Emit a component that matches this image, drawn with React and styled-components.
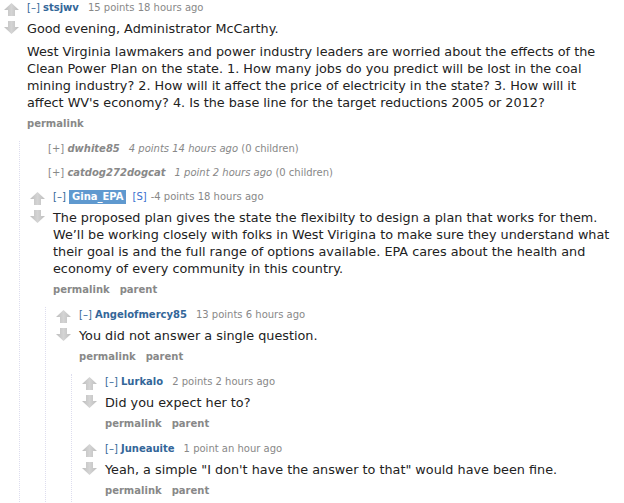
import React from 'react';
import styled, { createGlobalStyle } from 'styled-components';

const GlobalStyle = createGlobalStyle`
  body {
    margin: 0;
    background: #fff;
    font-family: "DejaVu Sans", Verdana, sans-serif;
    color: #222;
  }
`;

const comments = [
  {
    author: 'stsjwv',
    score: '15 points',
    time: '18 hours ago',
    body: [
      'Good evening, Administrator McCarthy.',
      "West Virginia lawmakers and power industry leaders are worried about the effects of the Clean Power Plan on the state. 1. How many jobs do you predict will be lost in the coal mining industry? 2. How will it affect the price of electricity in the state? 3. How will it affect WV's economy? 4. Is the base line for the target reductions 2005 or 2012?",
    ],
    buttons: ['permalink'],
    children: [
      { collapsed: true, author: 'dwhite85', score: '4 points', time: '14 hours ago', count: '(0 children)' },
      { collapsed: true, author: 'catdog272dogcat', score: '1 point', time: '2 hours ago', count: '(0 children)' },
      {
        author: 'Gina_EPA',
        submitter: true,
        score: '-4 points',
        time: '18 hours ago',
        body: [
          'The proposed plan gives the state the flexibilty to design a plan that works for them. We\u2019ll be working closely with folks in West Virigina to make sure they understand what their goal is and the full range of options available. EPA cares about the health and economy of every community in this country.',
        ],
        buttons: ['permalink', 'parent'],
        children: [
          {
            author: 'Angelofmercy85',
            score: '13 points',
            time: '6 hours ago',
            body: ['You did not answer a single question.'],
            buttons: ['permalink', 'parent'],
            children: [
              {
                author: 'Lurkalo',
                score: '2 points',
                time: '2 hours ago',
                body: ['Did you expect her to?'],
                buttons: ['permalink', 'parent'],
              },
              {
                author: 'Juneauite',
                score: '1 point',
                time: 'an hour ago',
                body: ['Yeah, a simple "I don\'t have the answer to that" would have been fine.'],
                buttons: ['permalink', 'parent'],
              },
            ],
          },
        ],
      },
    ],
  },
];

function Arrow({ down }) {
  return (
    <ArrowSvg width="15" height="13" viewBox="0 0 15 13" $down={down}>
      <defs>
        <linearGradient id="arrowShade" x1="0" y1="0" x2="1" y2="0">
          <stop offset="0" stopColor="#bdbdbd" />
          <stop offset="0.5" stopColor="#d4d4d4" />
          <stop offset="1" stopColor="#bdbdbd" />
        </linearGradient>
      </defs>
      <path d="M7.5 0 L15 7 L11 7 L11 13 L4 13 L4 7 L0 7 Z" fill="url(#arrowShade)" />
    </ArrowSvg>
  );
}

function Comment({ c }) {
  if (c.collapsed) {
    return (
      <Collapsed>
        <Tagline>
          <Expand $muted>[+]</Expand>{' '}
          <Author $collapsed>{c.author}</Author>
          <Meta $italic>{c.score} {c.time}</Meta> <Meta>{c.count}</Meta>
        </Tagline>
      </Collapsed>
    );
  }
  return (
    <Thing>
      <Row>
        <Midcol>
          <Arrow />
          <Arrow down />
        </Midcol>
        <Entry>
          <Tagline>
            <Expand>[–]</Expand>{' '}
            {c.submitter ? (
              <>
                <Author $highlight>{c.author}</Author>
                <Submitter>[S]</Submitter>
              </>
            ) : (
              <Author>{c.author}</Author>
            )}
            <Meta>{c.score} {c.time}</Meta>
          </Tagline>
          <Body>
            {c.body.map((p, i) => (
              <p key={i}>{p}</p>
            ))}
          </Body>
          <Buttons>
            {c.buttons.map((b) => (
              <li key={b}>{b}</li>
            ))}
          </Buttons>
        </Entry>
      </Row>
      {c.children && (
        <Children>
          {c.children.map((ch, i) => (
            <Comment key={i} c={ch} />
          ))}
        </Children>
      )}
    </Thing>
  );
}

export default function App() {
  return (
    <>
      <GlobalStyle />
      <Page>
        {comments.map((c, i) => (
          <Comment key={i} c={c} />
        ))}
      </Page>
    </>
  );
}

const Page = styled.div`
  width: 624px;
  height: 503px;
  overflow: hidden;
`;

const Thing = styled.div``;

const Row = styled.div`
  display: flex;
  align-items: flex-start;
  padding-bottom: 10px;
`;

const Midcol = styled.div`
  width: 15px;
  margin-left: 4px;
  padding-top: 3px;
  display: flex;
  flex-direction: column;
  gap: 5px;
`;

const ArrowSvg = styled.svg`
  display: block;
  transform: ${(p) => (p.$down ? 'rotate(180deg)' : 'none')};
`;

const Entry = styled.div`
  flex: 1;
  margin-left: 8px;
  padding-right: 11px;
`;

const Tagline = styled.div`
  font-size: 10px;
  line-height: 15px;
  color: #888;
  white-space: nowrap;
`;

const Expand = styled.span`
  color: ${(p) => (p.$muted ? '#888' : '#369')};
`;

const Author = styled.span`
  display: inline-block;
  font-weight: bold;
  font-style: ${(p) => (p.$collapsed ? 'italic' : 'normal')};
  color: ${(p) => (p.$highlight ? '#fff' : p.$collapsed ? '#888' : '#369')};
  background: ${(p) => (p.$highlight ? '#5f99cf' : 'transparent')};
  padding: ${(p) => (p.$highlight ? '0 3px' : '0')};
  line-height: ${(p) => (p.$highlight ? '14px' : '15px')};
  margin-right: ${(p) => (p.$highlight ? '6px' : '9px')};
`;

const Submitter = styled.span`
  color: #3a6fd0;
  margin-right: 4px;
`;

const Meta = styled.span`
  font-style: ${(p) => (p.$italic ? 'italic' : 'normal')};
`;

const Body = styled.div`
  margin-top: 5px;
  font-size: 12.8px;
  line-height: 17px;
  color: #222;

  p {
    margin: 0 0 6px;
  }
  p:last-child {
    margin-bottom: 0;
  }
`;

const Buttons = styled.ul`
  list-style: none;
  margin: 5px 0 0;
  padding: 0;
  display: flex;
  gap: 10px;
  font-size: 10px;
  line-height: 15px;
  font-weight: bold;
  color: #888;
`;

const Collapsed = styled.div`
  padding-left: 22px;
  padding-bottom: 9px;
`;

const Children = styled.div`
  margin-left: 19px;
  border-left: 1px dotted #dde;
  padding-left: 6px;
`;
